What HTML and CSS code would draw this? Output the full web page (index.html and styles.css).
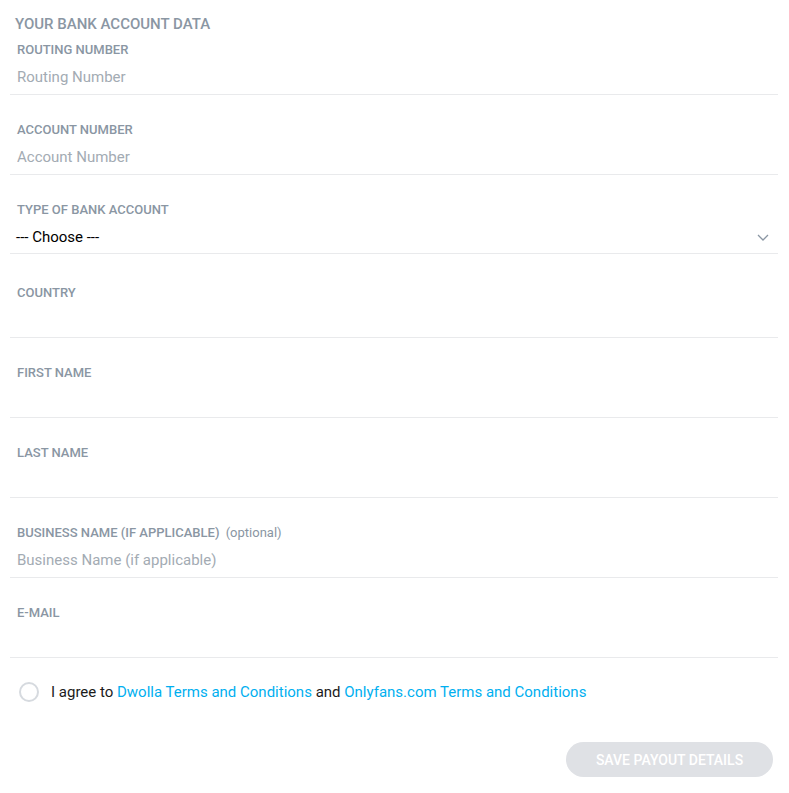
FILE: index.html
```html
<!DOCTYPE html>
<html>
<head>
    <title>Payout Details</title>
    <link rel="stylesheet" href="styles.css">
</head>
<body>
    <div class="payout-form">
        <h3 class="section-title">Your bank account data</h3>

        <div class="field field-first">
            <label class="field-label">Routing number</label>
            <input class="field-input" type="text" placeholder="Routing Number">
        </div>

        <div class="field">
            <label class="field-label">Account number</label>
            <input class="field-input" type="text" placeholder="Account Number">
        </div>

        <div class="field field-select">
            <label class="field-label">Type of bank account</label>
            <div class="select-box">
                <span>--- Choose ---</span>
                <svg class="chevron" width="12" height="7" viewBox="0 0 12 7">
                    <path d="M1 1l5 5 5-5" fill="none" stroke="#8a96a3" stroke-width="1.3"/>
                </svg>
            </div>
        </div>

        <div class="field field-tall">
            <label class="field-label">Country</label>
            <input class="field-input" type="text">
        </div>

        <div class="field">
            <label class="field-label">First name</label>
            <input class="field-input" type="text">
        </div>

        <div class="field">
            <label class="field-label">Last name</label>
            <input class="field-input" type="text">
        </div>

        <div class="field">
            <label class="field-label">Business name (if applicable) <span class="optional">(optional)</span></label>
            <input class="field-input" type="text" placeholder="Business Name (if applicable)">
        </div>

        <div class="field">
            <label class="field-label">E-mail</label>
            <input class="field-input" type="text">
        </div>

        <div class="agree-row">
            <span class="radio"></span>
            <span>I agree to <a href="#">Dwolla Terms and Conditions</a> and <a href="#">Onlyfans.com Terms and Conditions</a></span>
        </div>

        <div class="actions">
            <button class="save-btn" type="button" disabled>Save payout details</button>
        </div>
    </div>
</body>
</html>
```

FILE: styles.css
```css
body {
    margin: 0;
    background: #fff;
    font-family: Roboto, "Liberation Sans", sans-serif;
    color: #242529;
}
.payout-form {
    margin: 0 11px 0 10px;
}
.section-title {
    margin: 0;
    padding: 15px 0 0 5px;
    font-size: 15px;
    line-height: 18px;
    font-weight: 500;
    text-transform: uppercase;
    color: #8a96a3;
}
.field {
    padding: 27px 7px 0;
    border-bottom: 1px solid #e9eaec;
}
.field-first {
    padding-top: 9px;
}
.field-tall {
    padding-top: 31px;
}
.field-label {
    display: block;
    font-size: 13px;
    line-height: 16px;
    font-weight: 500;
    text-transform: uppercase;
    color: #8a96a3;
}
.optional {
    margin-left: 3px;
    font-weight: 400;
    text-transform: none;
    font-size: 13px;
}
.field-input {
    display: block;
    width: 100%;
    height: 36px;
    padding: 1px 0 0;
    box-sizing: border-box;
    border: none;
    outline: none;
    font-family: inherit;
    font-size: 15px;
    color: #242529;
    background: transparent;
}
.field-input::placeholder {
    color: #a3abb3;
}
.field-select .select-box {
    height: 35px;
    box-sizing: border-box;
    display: flex;
    align-items: center;
    justify-content: space-between;
    padding: 2px 2px 0 0;
    margin-left: -1px;
    font-size: 15px;
    color: #000;
}
.chevron {
    margin-top: 1px;
}
.agree-row {
    display: flex;
    align-items: center;
    padding: 23px 0 0 9px;
    font-size: 15px;
    line-height: 22px;
    color: #1b1b1b;
}
.radio {
    width: 16px;
    height: 16px;
    border: 2px solid #d6dadf;
    border-radius: 50%;
    margin-right: 12px;
    flex-shrink: 0;
}
.agree-row a {
    color: #00aff0;
    text-decoration: none;
}
.actions {
    display: flex;
    justify-content: flex-end;
    padding: 39px 5px 0 0;
}
.save-btn {
    width: 207px;
    height: 35px;
    border: none;
    border-radius: 18px;
    background: #dfe1e5;
    color: #fff;
    font-family: inherit;
    font-size: 14px;
    font-weight: 500;
    text-transform: uppercase;
    cursor: default;
}
```
